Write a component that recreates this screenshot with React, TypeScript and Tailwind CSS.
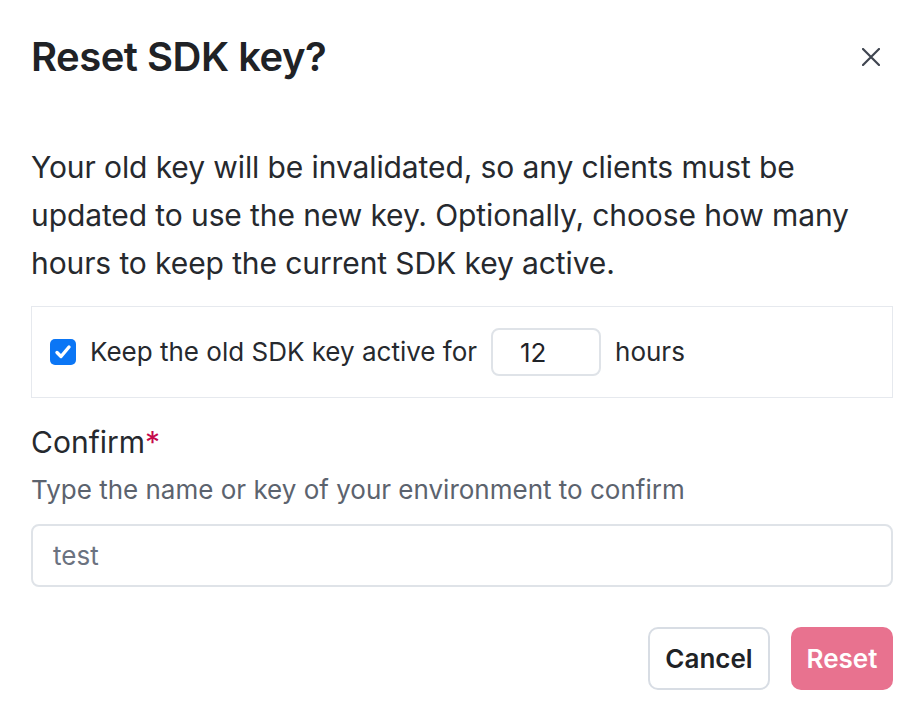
import React from 'react';

const font = { fontFamily: 'Inter, "Noto Sans", sans-serif' };

export default function App() {
  return (
    <div className="min-h-screen w-[910px] bg-white text-[#1f2328]" style={font}>
      <div className="pl-[31px] pr-[17px]">
        {/* Header */}
        <div className="flex items-center justify-between pt-[33px]">
          <h2 className="text-[40px] leading-[48px] font-semibold tracking-[-0.5px] text-[#202226]">
            Reset SDK key?
          </h2>
          <button className="mr-[13px] flex h-[18px] w-[18px] items-center justify-center text-[#3f4550]">
            <svg width="18" height="18" viewBox="0 0 18 18" fill="none" stroke="currentColor" strokeWidth="2.2" strokeLinecap="round">
              <path d="M1 1L17 17M17 1L1 17" />
            </svg>
          </button>
        </div>

        {/* Body */}
        <p className="mt-[62px] text-[30px] leading-[48px] tracking-[-0.1px] text-[#26292e]">
          Your old key will be invalidated, so any clients must be updated to use the new key. Optionally, choose how many
          hours to keep the current SDK key active.
        </p>

        <div className="mt-[19px] flex items-center border border-[#e6e9ee] px-[18px] py-[21px]">
          <span className="flex h-[26px] w-[26px] items-center justify-center rounded-[5px] bg-[#0b76f5]">
            <svg width="18" height="16" viewBox="0 0 18 16" fill="none" stroke="white" strokeWidth="3.4" strokeLinecap="round" strokeLinejoin="round">
              <path d="M3 8.5L7 12.5L15 3" />
            </svg>
          </span>
          <span className="ml-[14px] text-[26px] leading-[40px] text-[#26292e]">Keep the old SDK key active for</span>
          <div className="ml-[14px] flex h-[48px] w-[110px] items-center rounded-[8px] border-2 border-[#dfe3e8] pl-[27px] text-[26px] text-[#1f2328]">
            12
          </div>
          <span className="ml-[14px] text-[26px] leading-[40px] text-[#26292e]">hours</span>
        </div>

        {/* Confirm */}
        <div className="mt-[24px] text-[30px] leading-[40px] text-[#26292e]">
          Confirm<span className="text-[#c5094c]">*</span>
        </div>
        <div className="mt-[10px] text-[26px] leading-[36px] text-[#5c636e]">
          Type the name or key of your environment to confirm
        </div>
        <div className="mt-[16px] flex h-[63px] items-center rounded-[8px] border-2 border-[#dfe3e8] pl-[20px] text-[26px] text-[#6b7280]">
          test
        </div>

        {/* Footer */}
        <div className="mt-[40px] flex justify-end gap-[21px]">
          <button className="h-[63px] w-[122px] rounded-[10px] border-2 border-[#d8dde4] bg-white text-[26px] font-semibold text-[#202226]">
            Cancel
          </button>
          <button className="h-[63px] w-[102px] rounded-[10px] bg-[#e8728f] text-[26px] font-semibold text-white">
            Reset
          </button>
        </div>
      </div>
    </div>
  );
}
